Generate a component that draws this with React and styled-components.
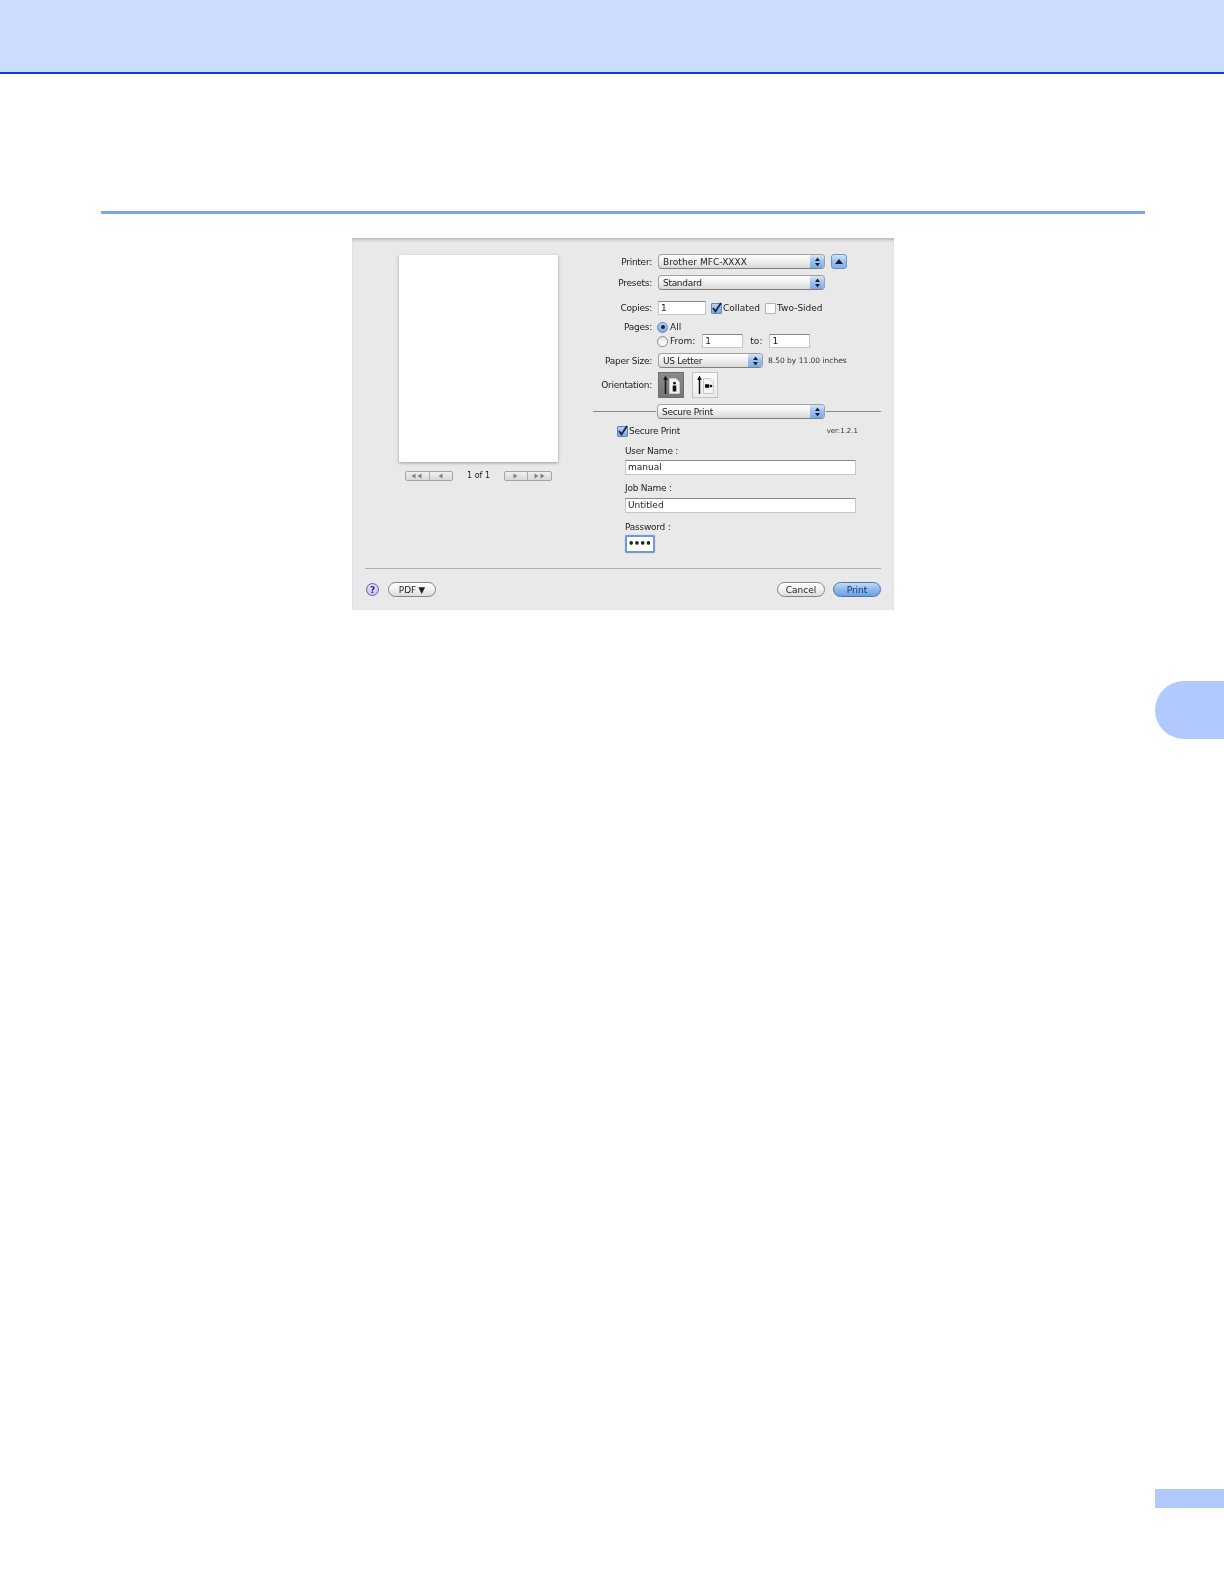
import React from 'react'
import styled, { createGlobalStyle } from 'styled-components'

const Global = createGlobalStyle`
  html, body {
    margin: 0;
    padding: 0;
    background: #fff;
  }
  body {
    font-family: "DejaVu Sans", "Liberation Sans", sans-serif;
  }
`

const Page = styled.div`
  width: 1224px;
  height: 1580px;
  overflow: hidden;
  display: flex;
  flex-direction: column;
  background: #fff;
`

const Header = styled.header`
  flex: 0 0 auto;
  height: 72px;
  background: #cbdcff;
  border-bottom: 2px solid #0a3fd6;
`

const TitleRule = styled.div`
  flex: 0 0 auto;
  height: 3px;
  margin: 137px 79px 0 101px;
  background: #82a4ee;
`

const Dialog = styled.div`
  flex: 0 0 auto;
  box-sizing: border-box;
  width: 542px;
  height: 372px;
  margin: 24px 0 0 352px;
  padding-top: 16px;
  display: flex;
  flex-direction: column;
  background: #e9e9e9;
  color: #222;
  font-size: 9px;
  line-height: 14px;
  box-shadow: inset 0 3px 3px -1px #b8b8b8;
  filter: blur(0.4px);
`

const Main = styled.div`
  flex: 0 0 314px;
  display: flex;
`

const PreviewPane = styled.div`
  flex: 0 0 241px;
  box-sizing: border-box;
  padding: 1px 0 0 47px;
`

const Sheet = styled.div`
  width: 159px;
  height: 207px;
  background: #fff;
  box-shadow: 0 1px 3px rgba(0, 0, 0, 0.35);
`

const PageNav = styled.div`
  width: 147px;
  height: 10px;
  margin: 9px 0 0 6px;
  display: flex;
  align-items: center;
  justify-content: space-between;
`

const NavGroup = styled.div`
  box-sizing: border-box;
  width: 48px;
  height: 10px;
  display: flex;
  border: 1px solid #a4a4a4;
  border-radius: 2px;
  background: linear-gradient(#f0f0f0, #d8d8d8);
`

const NavCell = styled.div`
  flex: 1;
  display: flex;
  align-items: center;
  justify-content: center;
  & + & {
    border-left: 1px solid #ababab;
  }
`

const PageCount = styled.span`
  font-size: 8px;
  line-height: 10px;
`

const FormPane = styled.div`
  flex: 1;
  display: flex;
  flex-direction: column;
`

const Row = styled.div`
  display: flex;
  align-items: center;
  height: ${p => p.$height || 14}px;
  margin-top: ${p => p.$top || 0}px;
`

const Label = styled.span`
  flex: 0 0 59px;
  text-align: right;
  margin-right: 6px;
  white-space: nowrap;
  letter-spacing: -0.25px;
`

const Indent = styled.span`
  flex: 0 0 64px;
`

const SelectBox = styled.div`
  box-sizing: border-box;
  flex: 0 0 auto;
  width: ${p => p.$width}px;
  height: 15px;
  display: flex;
  align-items: center;
  justify-content: space-between;
  padding-left: 4px;
  border: 1px solid #a0a0a0;
  border-bottom-color: #808080;
  border-radius: 4px;
  overflow: hidden;
  background: linear-gradient(#ffffff, #f1f1f1 45%, #d8d8d8);
  letter-spacing: -0.3px;
`

const PrinterName = styled.span`
  letter-spacing: 0.05px;
`

const Stepper = styled.span`
  flex: 0 0 14px;
  height: 100%;
  display: flex;
  align-items: center;
  justify-content: center;
  background: linear-gradient(#d6e5f9, #9cc0ee 50%, #7dabe6);
`

const UpButton = styled.div`
  box-sizing: border-box;
  width: 16px;
  height: 15px;
  margin-left: 6px;
  display: flex;
  align-items: center;
  justify-content: center;
  border: 1px solid #6d94c8;
  border-radius: 3px;
  background: linear-gradient(#d6e5f9, #9cc0ee 50%, #86b1e8);
`

const Field = styled.div`
  box-sizing: border-box;
  flex: 0 0 auto;
  width: ${p => p.$width}px;
  height: ${p => p.$height || 14}px;
  margin-left: ${p => p.$left || 0}px;
  padding-left: 2px;
  background: #fff;
  border: 1px solid #c6c6c6;
  border-top-color: #8a8a8a;
  line-height: ${p => (p.$height || 14) - 2}px;
  font-size: 9px;
`

const PasswordField = styled(Field)`
  border: 2px solid #6d9bd8;
  border-radius: 2px;
  box-shadow: 0 0 1px #6d9bd8;
  line-height: 13px;
  padding-left: 1px;
  font-size: 10px;
  font-weight: 700;
  letter-spacing: -0.6px;
`

const Box = styled.span`
  box-sizing: border-box;
  flex: 0 0 auto;
  width: 11px;
  height: 11px;
  margin-left: ${p => p.$left || 0}px;
  display: flex;
  align-items: center;
  justify-content: center;
  border: 1px solid ${p => (p.$checked ? '#5c86bc' : '#b2b2b2')};
  border-radius: 1px;
  background: ${p => (p.$checked ? 'linear-gradient(#b5d0f2, #7dabe6)' : '#fbfbfb')};
`

const Radio = styled.span`
  box-sizing: border-box;
  flex: 0 0 auto;
  width: 11px;
  height: 11px;
  display: flex;
  align-items: center;
  justify-content: center;
  border: 1px solid ${p => (p.$checked ? '#5c86bc' : '#8a8a8a')};
  border-radius: 50%;
  background: ${p => (p.$checked ? 'linear-gradient(#b5d0f2, #7dabe6)' : 'linear-gradient(#e6e6e6, #fff)')};
  margin-left: ${p => (p.$checked ? -1 : 0)}px;
  &::after {
    content: '';
    display: ${p => (p.$checked ? 'block' : 'none')};
    width: 4px;
    height: 4px;
    border-radius: 50%;
    background: #12233f;
  }
`

const Inline = styled.span`
  margin-left: ${p => p.$left || 0}px;
  white-space: nowrap;
`

const Hint = styled(Inline)`
  font-size: 7.5px;
  color: #333;
`

const OrientButton = styled.div`
  box-sizing: border-box;
  width: 26px;
  height: 26px;
  margin-left: ${p => p.$left || 0}px;
  display: flex;
  align-items: center;
  justify-content: center;
  border: 1px solid ${p => (p.$active ? '#6e6e6e' : '#c2c2c2')};
  background: ${p => (p.$active ? 'linear-gradient(#8a8a8a, #767676)' : 'linear-gradient(#fbfbfb, #ececec)')};
`

const PanelLine = styled.span`
  flex: 0 0 ${p => p.$width}px;
  height: 1px;
  background: #8a8a8a;
  margin-right: ${p => p.$right || 0}px;
  margin-left: ${p => p.$left || 0}px;
`

const SecureOptions = styled.div`
  display: flex;
  flex-direction: column;
  padding: 0 36px 0 32px;
`

const SecureHead = styled.div`
  display: flex;
  align-items: center;
  height: 14px;
  margin: 5px 0 0 -8px;
`

const SecureLabel = styled(Inline)`
  letter-spacing: -0.3px;
`

const Version = styled.span`
  margin-left: auto;
  font-size: 7px;
  color: #333;
`

const FieldLabel = styled.div`
  height: 14px;
  margin-top: ${p => p.$top}px;
  margin-bottom: ${p => p.$bottom}px;
  letter-spacing: -0.25px;
`

const Footer = styled.div`
  display: flex;
  align-items: center;
  height: 44px;
  margin: 0 13px;
  border-top: 1px solid #b0b0b0;
`

const HelpButton = styled.div`
  box-sizing: border-box;
  width: 13px;
  height: 13px;
  margin-left: 1px;
  display: flex;
  align-items: center;
  justify-content: center;
  border: 1px solid #6b5bb5;
  border-radius: 50%;
  background: radial-gradient(circle at 50% 35%, #f2f0ff, #b9aef2);
  color: #2c2170;
  font-size: 9px;
  font-weight: 700;
`

const PillButton = styled.div`
  box-sizing: border-box;
  width: 48px;
  height: 15px;
  margin-left: ${p => p.$left || 0}px;
  display: flex;
  align-items: center;
  justify-content: center;
  gap: 2px;
  border: 1px solid ${p => (p.$primary ? '#4f74aa' : '#858585')};
  border-radius: 8px;
  color: ${p => (p.$primary ? '#12305c' : 'inherit')};
  background: ${p => (p.$primary
    ? 'linear-gradient(#c6daf5, #8fb9ed 50%, #6ba0e3)'
    : 'linear-gradient(#ffffff, #f1f1f1 50%, #dcdcdc)')};
`

const Spacer = styled.span`
  flex: 1;
`

const ChapterTab = styled.div`
  flex: 0 0 auto;
  align-self: flex-end;
  width: 69px;
  height: 58px;
  margin-top: 71px;
  background: #b2c9ff;
  border-radius: 29px 0 0 29px;
`

const PageTab = styled.div`
  flex: 0 0 auto;
  align-self: flex-end;
  width: 69px;
  height: 19px;
  margin-top: 750px;
  background: #b2c9ff;
`

const Updown = () => (
  <svg width="7" height="10" viewBox="0 0 7 10">
    <path d="M3.5 0.5 L6 4 H1 Z M3.5 9.5 L1 6 H6 Z" fill="#14233c" />
  </svg>
)

const Check = () => (
  <svg width="11" height="11" viewBox="0 0 11 11" style={{ overflow: 'visible' }}>
    <path d="M2 5 L4.5 8.5 L10 0" fill="none" stroke="#14233c" strokeWidth="1.8" />
  </svg>
)

const Arrows = ({ dir, count }) => (
  <svg width={count * 6} height="6" viewBox={`0 0 ${count * 6} 6`}>
    {Array.from({ length: count }).map((_, i) => (
      <path
        key={i}
        transform={`translate(${i * 6} 0)`}
        d={dir === 'left' ? 'M0.5 3 L4.5 0.5 V5.5 Z' : 'M4.5 3 L0.5 0.5 V5.5 Z'}
        fill="#808080"
      />
    ))}
  </svg>
)

const PortraitIcon = () => (
  <svg width="22" height="20" viewBox="0 0 22 20">
    <path d="M5.5 19 V4" stroke="#111" strokeWidth="1.5" />
    <path d="M5.5 0.5 L7.8 5 H3.2 Z" fill="#111" />
    <path d="M9.5 3.5 H16 L19.5 7 V18.5 H9.5 Z" fill="#f4f4f4" stroke="#c8c8c8" />
    <circle cx="14.5" cy="8.2" r="1.4" fill="#111" />
    <path d="M12.7 10.5 H16.3 V16.5 H12.7 Z" fill="#111" />
  </svg>
)

const LandscapeIcon = () => (
  <svg width="22" height="20" viewBox="0 0 22 20">
    <path d="M5.5 19 V4" stroke="#111" strokeWidth="1.5" />
    <path d="M5.5 0.5 L7.8 5 H3.2 Z" fill="#111" />
    <path d="M9.5 3.5 H16 L19.5 7 V18.5 H9.5 Z" fill="#f4f4f4" stroke="#c8c8c8" />
    <circle cx="17" cy="11" r="1.3" fill="#111" />
    <path d="M11 9.2 H15.2 V12.8 H11 Z" fill="#111" />
  </svg>
)

const Select = ({ width, children }) => (
  <SelectBox $width={width}>
    {children}
    <Stepper><Updown /></Stepper>
  </SelectBox>
)

function PrintDialog() {
  return (
    <Dialog>
      <Main>
        <PreviewPane>
          <Sheet />
          <PageNav>
            <NavGroup>
              <NavCell><Arrows dir="left" count={2} /></NavCell>
              <NavCell><Arrows dir="left" count={1} /></NavCell>
            </NavGroup>
            <PageCount>1 of 1</PageCount>
            <NavGroup>
              <NavCell><Arrows dir="right" count={1} /></NavCell>
              <NavCell><Arrows dir="right" count={2} /></NavCell>
            </NavGroup>
          </PageNav>
        </PreviewPane>

        <FormPane>
          <Row $height={15}>
            <Label>Printer:</Label>
            <Select width={167}><PrinterName>Brother MFC-XXXX</PrinterName></Select>
            <UpButton>
              <svg width="8" height="5" viewBox="0 0 8 5"><path d="M4 0 L8 5 H0 Z" fill="#14233c" /></svg>
            </UpButton>
          </Row>
          <Row $height={15} $top={6}>
            <Label>Presets:</Label>
            <Select width={167}>Standard</Select>
          </Row>
          <Row $top={11}>
            <Label>Copies:</Label>
            <Field $width={48}>1</Field>
            <Box $checked $left={5}><Check /></Box>
            <Inline $left={1}>Collated</Inline>
            <Box $left={5} />
            <Inline $left={1}>Two-Sided</Inline>
          </Row>
          <Row $top={5}>
            <Label>Pages:</Label>
            <Radio $checked />
            <Inline $left={2}>All</Inline>
          </Row>
          <Row>
            <Indent />
            <Radio />
            <Inline $left={2}>From:</Inline>
            <Field $width={41} $left={7}>1</Field>
            <Inline $left={7}>to:</Inline>
            <Field $width={41} $left={7}>1</Field>
          </Row>
          <Row $top={5} $height={15}>
            <Label>Paper Size:</Label>
            <Select width={105}>US Letter</Select>
            <Hint $left={5}>8.50 by 11.00 inches</Hint>
          </Row>
          <Row $top={4} $height={26}>
            <Label>Orientation:</Label>
            <OrientButton $active><PortraitIcon /></OrientButton>
            <OrientButton $left={8}><LandscapeIcon /></OrientButton>
          </Row>
          <Row $top={6} $height={15}>
            <PanelLine $width={63} $right={1} />
            <Select width={168}>Secure Print</Select>
            <PanelLine $width={55} $left={1} />
          </Row>
          <SecureOptions>
            <SecureHead>
              <Box $checked><Check /></Box>
              <SecureLabel $left={1}>Secure Print</SecureLabel>
              <Version>ver:1.2.1</Version>
            </SecureHead>
            <FieldLabel $top={6} $bottom={2}>User Name :</FieldLabel>
            <Field $width={231} $height={15}>manual</Field>
            <FieldLabel $top={6} $bottom={3}>Job Name :</FieldLabel>
            <Field $width={231} $height={15}>Untitled</Field>
            <FieldLabel $top={7} $bottom={1}>Password :</FieldLabel>
            <PasswordField $width={30} $height={18}>••••</PasswordField>
          </SecureOptions>
        </FormPane>
      </Main>
      <Footer>
        <HelpButton>?</HelpButton>
        <PillButton $left={9}>PDF<span>▼</span></PillButton>
        <Spacer />
        <PillButton>Cancel</PillButton>
        <PillButton $primary $left={8}>Print</PillButton>
      </Footer>
    </Dialog>
  )
}

export default function App() {
  return (
    <Page>
      <Global />
      <Header />
      <TitleRule />
      <PrintDialog />
      <ChapterTab />
      <PageTab />
    </Page>
  )
}
